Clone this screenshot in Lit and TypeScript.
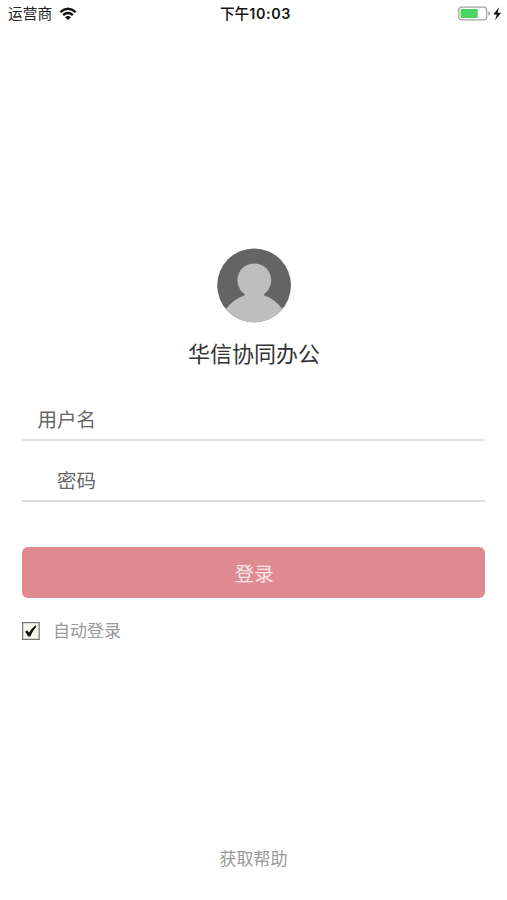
import { LitElement, html, css } from "lit";
import { customElement } from "lit/decorators.js";

@customElement("status-bar")
class StatusBar extends LitElement {
  static styles = css`
    :host {
      display: grid;
      grid-template-columns: 1fr auto 1fr;
      align-items: center;
      height: 27px;
      padding: 0 5px 0 8px;
      font-size: 14.7px;
      line-height: 27px;
      color: #222;
    }
    .carrier { display: flex; align-items: center; gap: 7px; }
    .time { font-weight: 500; color: #161616; padding-left: 1px; }
    .digits { font-family: "Inter", sans-serif; font-weight: 600; font-size: 14.3px; letter-spacing: 0.65px; }
    .power { display: flex; align-items: center; justify-content: flex-end; }
    svg { display: block; }
    .power svg { margin-bottom: 1px; }
    .carrier svg { margin-bottom: 1px; }
  `;
  render() {
    return html`
      <div class="carrier">
        <span>运营商</span>
        <svg width="18" height="14" viewBox="0 0 18 14" fill="none" stroke="#111" stroke-width="2.5">
          <path d="M1.3 5.1Q9-1.6 16.7 5.1" />
          <path d="M4.1 8.1Q9 4 13.9 8.1" />
          <path d="M9 13.1L6 10.2Q9 7.9 12 10.2Z" fill="#111" stroke="none" />
        </svg>
      </div>
      <div class="time">下午<span class="digits">10:03</span></div>
      <div class="power">
        <svg width="44" height="16" viewBox="0 0 44 16">
          <rect x="0.8" y="1.2" width="27.8" height="12.6" rx="2.6" fill="#fff" stroke="#a4a4a4" stroke-width="1.3" />
          <rect x="2.6" y="3" width="17.2" height="9" rx="0.8" fill="#4cd463" />
          <path d="M30.3 5.2Q32.3 5.8 32.3 7.5T30.3 9.8Z" fill="#a4a4a4" />
          <path d="M41 1.2L35.3 8.4H38.8L37 14.2L43.2 6.7H39.7Z" fill="#111" />
        </svg>
      </div>
    `;
  }
}

@customElement("app-root")
class AppRoot extends LitElement {
  static styles = css`
    :host {
      display: flex;
      flex-direction: column;
      box-sizing: border-box;
      height: 900px;
      background: #fff;
      font-family: "Liberation Sans", "Noto Sans CJK SC", sans-serif;
    }
    .brand {
      display: flex;
      flex-direction: column;
      align-items: center;
      padding: 221px 0 0 1px;
    }
    .avatar { display: block; }
    .title {
      margin: 15px 0 0;
      font-size: 22px;
      line-height: 34px;
      font-weight: 400;
      color: #333;
    }
    .form { padding: 25px 22px 0 22.4px; }
    .field {
      box-sizing: border-box;
      height: 61px;
      display: flex;
      align-items: flex-end;
      border-bottom: 2px solid #dedede;
    }
    .field:first-child { height: 44px; }
    .label {
      width: 73.6px;
      text-align: right;
      font-size: 19.5px;
      line-height: 28px;
      padding-bottom: 5px;
      color: #666;
      white-space: nowrap;
    }
    .submit {
      display: block;
      width: 100%;
      height: 51px;
      margin-top: 45px;
      padding: 3px 0 0 1px;
      border: 0;
      border-radius: 6px;
      background: #df8a91;
      color: #fbe6e6;
      font: inherit;
      font-size: 19.5px;
      line-height: 48px;
    }
    .auto {
      display: flex;
      align-items: center;
      gap: 12.6px;
      height: 26px;
      margin-top: 20px;
      font-size: 17px;
      line-height: 24px;
      color: #999;
    }
    .auto span { padding-top: 1px; }
    .help {
      margin-top: auto;
      padding-bottom: 27px;
      text-align: center;
      font-size: 17px;
      line-height: 26px;
      color: #999;
    }
  `;
  render() {
    return html`
      <status-bar></status-bar>
      <div class="brand">
        <svg class="avatar" width="75" height="75" viewBox="0 0 75 75">
          <defs><clipPath id="disc"><circle cx="37.1" cy="37.3" r="36.9" /></clipPath></defs>
          <circle cx="37.1" cy="37.3" r="36.9" fill="#646464" />
          <g clip-path="url(#disc)" fill="#bebebe">
            <circle cx="37.3" cy="32.3" r="16.9" />
            <path d="M27.6 44V47.4Q17 50.5 9.2 60.5V75H65V60.5Q57.5 50.5 47.2 47.4V44Z" />
          </g>
        </svg>
        <h1 class="title">华信协同办公</h1>
      </div>
      <div class="form">
        <div class="field"><span class="label">用户名</span></div>
        <div class="field"><span class="label">密码</span></div>
        <button class="submit">登录</button>
        <div class="auto">
          <svg width="18" height="18" viewBox="0 0 18 18">
            <rect x="0.6" y="0.6" width="16.6" height="16.8" fill="#f6f6ee" stroke="#777" stroke-width="1.2" />
            <path d="M3 9.8L5.4 8.4L7 10.8Q9.5 6.5 13.4 3.2L14.4 4.6Q10.8 8.8 8.2 14.4H6Q4.8 11.6 3 9.8Z" fill="#111" />
          </svg>
          <span>自动登录</span>
        </div>
      </div>
      <div class="help">获取帮助</div>
    `;
  }
}
